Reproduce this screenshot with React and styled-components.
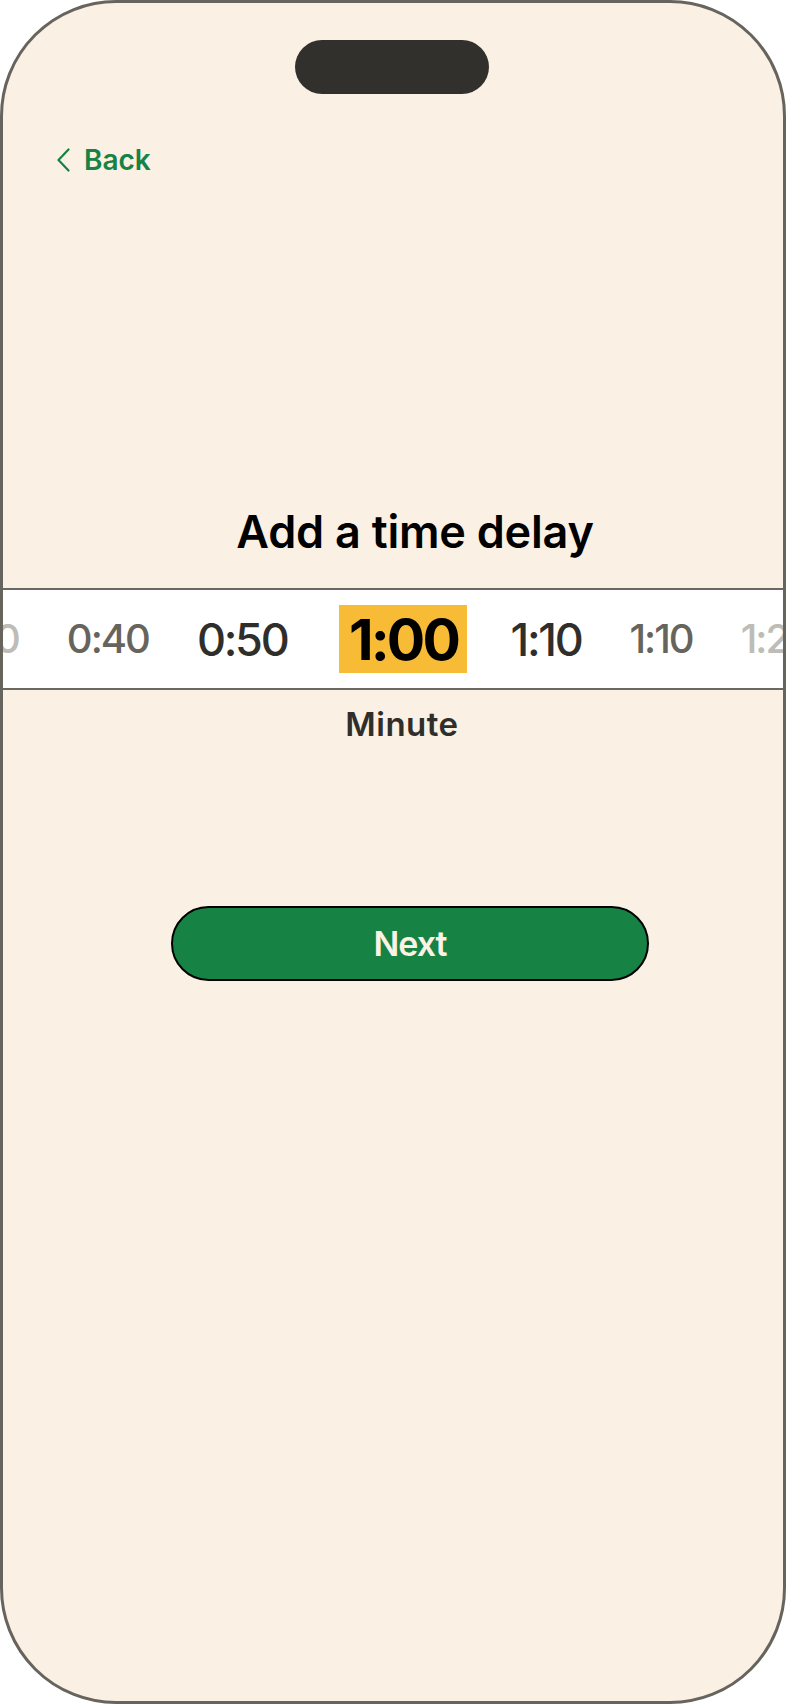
import React from "react";
import styled, { createGlobalStyle } from "styled-components";

const Global = createGlobalStyle`
  html, body { margin: 0; padding: 0; background: #ffffff; }
  * { box-sizing: border-box; }
  body { font-family: Inter, "Liberation Sans", sans-serif; }
`;

const Phone = styled.div`
  width: 786px;
  height: 1704px;
  border: 3px solid #67645d;
  border-radius: 116px;
  background: #faf0e4;
  overflow: hidden;
  display: flex;
  flex-direction: column;
`;

const Notch = styled.div`
  align-self: center;
  width: 194px;
  height: 54px;
  margin-top: 37px;
  margin-left: -3px;
  border-radius: 27px;
  background: #31302d;
`;

const BackButton = styled.button`
  align-self: flex-start;
  display: flex;
  align-items: center;
  gap: 14px;
  margin: 52px 0 0 54px;
  padding: 0;
  border: none;
  background: none;
  color: #168243;
  font-family: Inter, "Liberation Sans", sans-serif;
  font-weight: 600;
  font-size: 28px;
  line-height: 28px;
  letter-spacing: 0;
  cursor: pointer;
`;

const Title = styled.h1`
  margin: 335px 0 0 44px;
  align-self: center;
  font-family: Inter, "Liberation Sans", sans-serif;
  font-weight: 600;
  font-size: 45px;
  line-height: 45px;
  letter-spacing: -0.005em;
  color: #000;
`;

const Band = styled.div`
  margin-top: 34px;
  height: 102px;
  background: #ffffff;
  border-top: 2px solid #6b6761;
  border-bottom: 2px solid #6b6761;
  overflow: hidden;
  display: flex;
  align-items: center;
`;

const Strip = styled.div`
  display: flex;
  align-items: center;
  gap: 48px;
  white-space: nowrap;
  margin-left: ${(p) => p.$offset}px;
  flex-shrink: 0;
`;

const tones = {
  faint: { color: "#bebcb6", size: 40, weight: 500 },
  muted: { color: "#67645e", size: 40, weight: 500 },
  near: { color: "#2f2e2b", size: 45, weight: 500 },
};

const Time = styled.span`
  font-family: Inter, "Liberation Sans", sans-serif;
  font-size: ${(p) => tones[p.$tone].size}px;
  line-height: 1;
  font-weight: ${(p) => tones[p.$tone].weight};
  color: ${(p) => tones[p.$tone].color};
  letter-spacing: -0.05em;
`;

const Selected = styled.span`
  display: flex;
  align-items: center;
  justify-content: center;
  width: 128px;
  height: 68px;
  margin: 0 -5px 0 4px;
  background: #f7bb36;
  font-family: Inter, "Liberation Sans", sans-serif;
  font-size: 57px;
  line-height: 1;
  font-weight: 700;
  letter-spacing: -0.05em;
  color: #000;
`;

const Unit = styled.div`
  align-self: center;
  margin: 18px 0 0 18px;
  font-family: Inter, "Liberation Sans", sans-serif;
  font-weight: 600;
  font-size: 33px;
  line-height: 33px;
  letter-spacing: 0.015em;
  color: #2f2e2b;
`;

const NextButton = styled.button`
  align-self: center;
  margin: 165px 0 0 34px;
  width: 478px;
  height: 75px;
  border: 2px solid #000;
  border-radius: 38px;
  background: #168243;
  color: #fbf1e5;
  font-family: Inter, "Liberation Sans", sans-serif;
  font-weight: 600;
  font-size: 34px;
  line-height: 34px;
  letter-spacing: -0.03em;
  display: flex;
  align-items: center;
  justify-content: center;
  cursor: pointer;
`;

const Chevron = () => (
  <svg width="13" height="24" viewBox="0 0 13 24" fill="none">
    <polyline points="11.5,1.5 1.5,12 11.5,22.5" stroke="#168243" strokeWidth="2.2" strokeLinecap="round" strokeLinejoin="round" />
  </svg>
);

const items = [
  { label: "0:30", tone: "faint" },
  { label: "0:40", tone: "muted" },
  { label: "0:50", tone: "near" },
  { label: "1:00", tone: "selected" },
  { label: "1:10", tone: "near" },
  { label: "1:10", tone: "muted" },
  { label: "1:20", tone: "faint" },
];

export default function App() {
  return (
    <>
      <Global />
      <Phone>
        <Notch />
        <BackButton>
          <Chevron />
          Back
        </BackButton>
        <Title>Add a time delay</Title>
        <Band>
          <Strip $offset={-65}>
            {items.map((it, i) =>
              it.tone === "selected" ? (
                <Selected key={i}>{it.label}</Selected>
              ) : (
                <Time key={i} $tone={it.tone}>{it.label}</Time>
              )
            )}
          </Strip>
        </Band>
        <Unit>Minute</Unit>
        <NextButton>Next</NextButton>
      </Phone>
    </>
  );
}
